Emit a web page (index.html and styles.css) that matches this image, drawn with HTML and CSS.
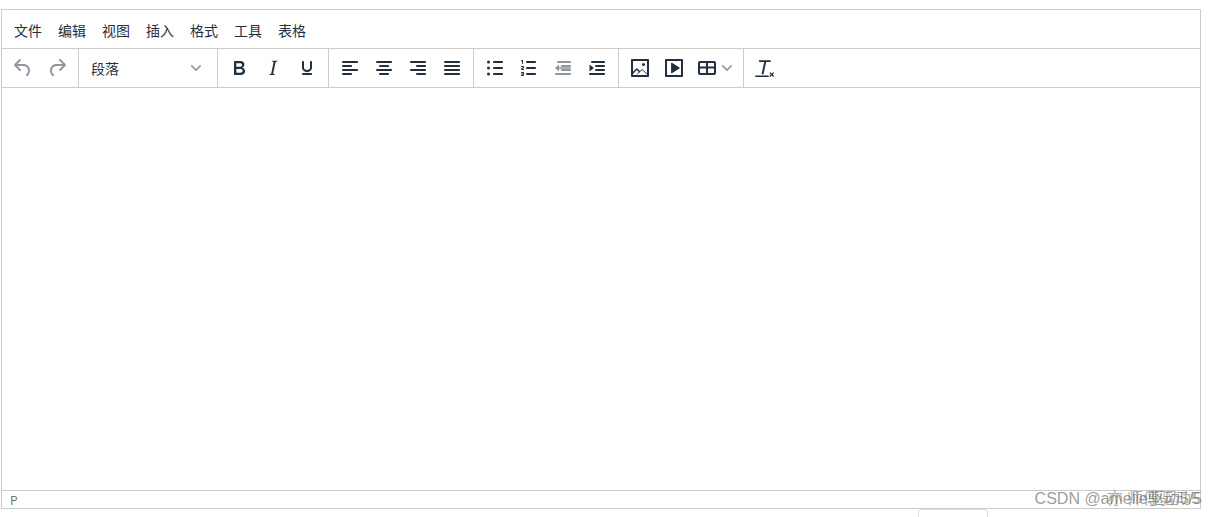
FILE: index.html
```html
<!DOCTYPE html>
<html lang="zh">
<head>
<meta charset="utf-8">
<title>编辑器</title>
<link rel="stylesheet" href="styles.css">
</head>
<body>
<div class="editor">
  <nav class="menubar">
    <span class="menu-item">文件</span>
    <span class="menu-item">编辑</span>
    <span class="menu-item">视图</span>
    <span class="menu-item">插入</span>
    <span class="menu-item">格式</span>
    <span class="menu-item">工具</span>
    <span class="menu-item">表格</span>
  </nav>
  <div class="toolbar">
    <div class="group">
      <span class="btn off"><svg viewBox="0 0 24 24"><path d="M6.4 8H12c3.7 0 6.2 2 6.8 5.1.6 2.7-.4 5.6-2.3 6.8a1 1 0 0 1-1-1.8c1.1-.6 1.8-2.7 1.4-4.6-.5-2.1-2.1-3.5-4.9-3.5H6.4l3.3 3.3a1 1 0 1 1-1.4 1.4l-5-5a1 1 0 0 1 0-1.4l5-5a1 1 0 0 1 1.4 1.4L6.4 8z"/></svg></span>
      <span class="btn off"><svg viewBox="0 0 24 24"><path d="M17.6 10H12c-2.8 0-4.4 1.4-4.9 3.5-.4 2 .3 4 1.4 4.6a1 1 0 1 1-1 1.8c-2-1.2-2.9-4.1-2.3-6.8.6-3 3-5.1 6.8-5.1h5.6l-3.3-3.3a1 1 0 1 1 1.4-1.4l5 5a1 1 0 0 1 0 1.4l-5 5a1 1 0 0 1-1.4-1.4l3.3-3.3z"/></svg></span>
    </div>
    <div class="group">
      <span class="select"><span>段落</span><svg class="chev" viewBox="0 0 10 10"><path d="M8.7 2.2c.3-.3.8-.3 1 0 .4.4.4.9 0 1.2L5.7 7.8c-.3.3-.9.3-1.2 0L.2 3.4a.8.8 0 0 1 0-1.2c.3-.3.8-.3 1.1 0L5 6l3.7-3.8z"/></svg></span>
    </div>
    <div class="group">
      <span class="btn"><svg viewBox="0 0 24 24"><path d="M7.8 19c-.3 0-.5 0-.6-.2l-.2-.5V5.7c0-.2 0-.4.2-.5l.6-.2h5c1.5 0 2.7.3 3.5 1 .7.6 1.1 1.4 1.1 2.5a3 3 0 0 1-.6 1.9c-.4.6-1 1-1.6 1.2.4.1.9.3 1.3.6s.8.7 1 1.2c.4.4.5 1 .5 1.6 0 1.3-.4 2.3-1.3 3-.8.7-2.1 1-3.8 1H7.8zm5-8.3c.6 0 1.2-.1 1.6-.5.4-.3.6-.7.6-1.3 0-1.1-.8-1.7-2.3-1.7H9.3v3.5h3.4zm.5 6c.7 0 1.3-.1 1.7-.4.4-.4.6-.9.6-1.5s-.2-1-.7-1.4c-.4-.3-1-.4-2-.4H9.4v3.8h4z"/></svg></span>
      <span class="btn"><svg viewBox="0 0 24 24"><path d="M16.7 4.7l-.1.9h-.3c-.6 0-1 0-1.4.3-.3.3-.4.6-.5 1.1l-2.1 9.8v.6c0 .5.4.8 1.4.8h.2l-.2.8H8l.2-.8h.2c1.1 0 1.8-.5 2-1.5l2-9.8.1-.5c0-.6-.4-.8-1.4-.8h-.3l.2-.9h5.8z"/></svg></span>
      <span class="btn"><svg viewBox="0 0 24 24"><path d="M16 5c.6 0 1 .4 1 1v5.5a4 4 0 0 1-.4 1.8l-1 1.4a5.3 5.3 0 0 1-5.5 1 5 5 0 0 1-1.6-1c-.5-.4-.8-.9-1.1-1.4a4 4 0 0 1-.4-1.8V6c0-.6.4-1 1-1s1 .4 1 1v5.5c0 .3 0 .6.2 1l.6.7a3.3 3.3 0 0 0 2.2.8 3.4 3.4 0 0 0 2.2-.8c.3-.2.4-.5.6-.8l.2-.9V6c0-.6.4-1 1-1zM8 17h8c.6 0 1 .4 1 1s-.4 1-1 1H8a1 1 0 0 1 0-2z"/></svg></span>
    </div>
    <div class="group">
      <span class="btn"><svg viewBox="0 0 24 24"><path d="M5 5h14c.6 0 1 .4 1 1s-.4 1-1 1H5a1 1 0 1 1 0-2zm0 4h8c.6 0 1 .4 1 1s-.4 1-1 1H5a1 1 0 1 1 0-2zm0 8h8c.6 0 1 .4 1 1s-.4 1-1 1H5a1 1 0 0 1 0-2zm0-4h14c.6 0 1 .4 1 1s-.4 1-1 1H5a1 1 0 0 1 0-2z"/></svg></span>
      <span class="btn"><svg viewBox="0 0 24 24"><path d="M5 5h14c.6 0 1 .4 1 1s-.4 1-1 1H5a1 1 0 1 1 0-2zm3 4h8c.6 0 1 .4 1 1s-.4 1-1 1H8a1 1 0 1 1 0-2zm0 8h8c.6 0 1 .4 1 1s-.4 1-1 1H8a1 1 0 0 1 0-2zm-3-4h14c.6 0 1 .4 1 1s-.4 1-1 1H5a1 1 0 0 1 0-2z"/></svg></span>
      <span class="btn"><svg viewBox="0 0 24 24"><path d="M5 5h14c.6 0 1 .4 1 1s-.4 1-1 1H5a1 1 0 1 1 0-2zm6 4h8c.6 0 1 .4 1 1s-.4 1-1 1h-8a1 1 0 0 1 0-2zm0 8h8c.6 0 1 .4 1 1s-.4 1-1 1h-8a1 1 0 0 1 0-2zm-6-4h14c.6 0 1 .4 1 1s-.4 1-1 1H5a1 1 0 0 1 0-2z"/></svg></span>
      <span class="btn"><svg viewBox="0 0 24 24"><path d="M5 5h14c.6 0 1 .4 1 1s-.4 1-1 1H5a1 1 0 1 1 0-2zm0 4h14c.6 0 1 .4 1 1s-.4 1-1 1H5a1 1 0 1 1 0-2zm0 4h14c.6 0 1 .4 1 1s-.4 1-1 1H5a1 1 0 0 1 0-2zm0 4h14c.6 0 1 .4 1 1s-.4 1-1 1H5a1 1 0 0 1 0-2z"/></svg></span>
    </div>
    <div class="group">
      <span class="btn"><svg viewBox="0 0 24 24"><path d="M11 5h8c.6 0 1 .4 1 1s-.4 1-1 1h-8a1 1 0 0 1 0-2zm0 6h8c.6 0 1 .4 1 1s-.4 1-1 1h-8a1 1 0 0 1 0-2zm0 6h8c.6 0 1 .4 1 1s-.4 1-1 1h-8a1 1 0 0 1 0-2zM5.5 4.5a1.5 1.5 0 1 1 0 3 1.5 1.5 0 0 1 0-3zm0 6a1.5 1.5 0 1 1 0 3 1.5 1.5 0 0 1 0-3zm0 6a1.5 1.5 0 1 1 0 3 1.5 1.5 0 0 1 0-3z"/></svg></span>
      <span class="btn"><svg viewBox="0 0 24 24"><path d="M10 17h8c.6 0 1 .4 1 1s-.4 1-1 1h-8a1 1 0 0 1 0-2zm0-6h8c.6 0 1 .4 1 1s-.4 1-1 1h-8a1 1 0 0 1 0-2zm0-6h8c.6 0 1 .4 1 1s-.4 1-1 1h-8a1 1 0 1 1 0-2zM6 4v3.5c0 .3-.2.5-.5.5a.5.5 0 0 1-.5-.5V5h-.5a.5.5 0 0 1 0-1H6zm-1 8.8l.2.2h1.3c.3 0 .5.2.5.5s-.2.5-.5.5H4.9a1 1 0 0 1-.9-1V13c0-.4.3-.8.6-1l1.2-.4.2-.3a.2.2 0 0 0-.2-.2H4.5a.5.5 0 0 1-.5-.5c0-.3.2-.5.5-.5h1.6c.5 0 .9.4.9 1v.4c0 .4-.3.8-.6 1l-1.2.4-.2.3zM7 17v2c0 .6-.4 1-1 1H4.5a.5.5 0 0 1 0-1h1.2c.2 0 .3-.1.3-.3 0-.2-.1-.3-.3-.3H4.4a.4.4 0 1 1 0-.8h1.3c.2 0 .3-.1.3-.3 0-.2-.1-.3-.3-.3H4.5a.5.5 0 1 1 0-1H6c.6 0 1 .4 1 1z"/></svg></span>
      <span class="btn off"><svg viewBox="0 0 24 24"><path d="M7.8 11.2h11.2c.6 0 1 .3 1 .8s-.4.8-1 .8H7.8l2 .1-.6.7-1.2-1.6 1.2-1.6.6.7zM4 12l4-3.4v6.8L4 12zm3-7h12c.6 0 1 .4 1 1s-.4 1-1 1H7a1 1 0 1 1 0-2zm4 4h8c.6 0 1 .4 1 1s-.4 1-1 1h-8a1 1 0 0 1 0-2zm0 4h8c.6 0 1 .4 1 1s-.4 1-1 1h-8a1 1 0 0 1 0-2zm-6 4h14c.6 0 1 .4 1 1s-.4 1-1 1H5a1 1 0 0 1 0-2z"/></svg></span>
      <span class="btn"><svg viewBox="0 0 24 24"><path d="M7 5h12c.6 0 1 .4 1 1s-.4 1-1 1H7a1 1 0 1 1 0-2zm4 4h8c.6 0 1 .4 1 1s-.4 1-1 1h-8a1 1 0 0 1 0-2zm0 4h8c.6 0 1 .4 1 1s-.4 1-1 1h-8a1 1 0 0 1 0-2zm-6 4h14c.6 0 1 .4 1 1s-.4 1-1 1H5a1 1 0 0 1 0-2zM4.5 8.6 9 12l-4.500 3.400z"/></svg></span>
    </div>
    <div class="group">
      <span class="btn"><svg viewBox="0 0 24 24"><path d="M5 15.700l3.300-3.200c.3-.3.700-.3 1 0L12 15l1.700-1.600c.3-.3.700-.3 1 0l4.300 4.100V5H5v10.700zM5 18v1h3l2.800-2.900-2-2L5 18zm14 1v-.500l-4.800-4.600-1.700 1.600-1.700 1.700L8 19h11zM4 3h16c.6 0 1 .4 1 1v16c0 .6-.4 1-1 1H4a1 1 0 0 1-1-1V4c0-.6.4-1 1-1zm11.500 7a1.500 1.500 0 1 1 0-3 1.500 1.500 0 0 1 0 3z" transform="translate(0 0)"/></svg></span>
      <span class="btn"><svg viewBox="0 0 24 24"><path d="M4 3h16c.6 0 1 .4 1 1v16c0 .6-.4 1-1 1H4a1 1 0 0 1-1-1V4c0-.6.4-1 1-1zm1 2v14h14V5H5zm4.100 2.300c0-.4.400-.7.800-.5l7.600 4.700c.3.200.3.700 0 .9l-7.600 4.800c-.4.200-.8 0-.8-.5V7.300z"/></svg></span>
      <span class="btn split"><svg viewBox="0 0 24 24"><path d="M19 5a2 2 0 0 1 2 2v10a2 2 0 0 1-2 2H5a2 2 0 0 1-2-2V7c0-1.100.9-2 2-2h14zM5 7v3.500h6V7H5zm8 0v3.500h6V7h-6zm6 5.500h-6V17h6v-4.500zM11 17v-4.500H5V17h6z"/></svg><svg class="chev" viewBox="0 0 10 10"><path d="M8.700 2.200c.3-.3.800-.3 1 0 .4.400.4.900 0 1.200L5.700 7.800c-.3.300-.9.300-1.200 0L.2 3.400a.8.800 0 0 1 0-1.200c.3-.3.800-.3 1.100 0L5 6l3.700-3.800z"/></svg></span>
    </div>
    <div class="group last">
      <span class="btn"><svg viewBox="0 0 24 24"><path d="M13.200 6l-2.500 11.500c-.1.700-.7 1-1.300.9-.5-.1-.8-.5-.7-1L11.200 6H7.500a1 1 0 1 1 0-1.800h9.800a1 1 0 0 1 0 1.800h-4.100zM3 19.500h12c.6 0 1 .3 1 .8s-.4.700-1 .7H3c-.6 0-1-.3-1-.7s.4-.8 1-.8zm14.200-3.300 1.500 1.500 1.500-1.500.9.900-1.500 1.500 1.500 1.500-.9.900-1.500-1.500-1.500 1.500-.9-.9 1.500-1.500-1.500-1.500z"/></svg></span>
    </div>
  </div>
  <main class="content"></main>
  <footer class="statusbar">p</footer>
  <span class="mark">CSDN @amelie驱动5/5</span>
  <span class="mark over">亦 师傅驱动5</span>
</div>
<div class="tab"></div>
</body>
</html>
```

FILE: styles.css
```css
* { box-sizing: border-box; }
html, body { margin: 0; height: 517px; overflow: hidden; background: #fff; }
body {
  padding: 9px 16px 0 1px;
  font-family: "Noto Sans CJK SC", "Liberation Sans", sans-serif;
  color: #222f3e;
  position: relative;
}
.editor {
  position: relative;
  display: flex;
  flex-direction: column;
  width: 1200px;
  height: 500px;
  border: 1px solid #ccc;
}
.menubar {
  display: flex;
  align-items: center;
  height: 39px;
  padding: 2px 4px 0;
  border-bottom: 1px solid #ccc;
}
.menu-item {
  width: 44px;
  text-align: center;
  font-size: 14px;
  line-height: 20px;
}
.toolbar {
  display: flex;
  height: 39px;
  border-bottom: 1px solid #ccc;
}
.group {
  display: flex;
  align-items: center;
  padding: 0 4px;
  border-right: 1px solid #ccc;
}
.group.last { border-right: 0; }
.btn {
  display: flex;
  align-items: center;
  justify-content: center;
  width: 34px;
  height: 34px;
  flex: none;
}
.btn svg { width: 24px; height: 24px; flex: none; fill: #222f3e; }
.btn.off svg { fill: rgba(34, 47, 62, 0.5); }
.btn.split { width: 48px; justify-content: flex-start; padding-left: 4px; }
.btn.split .chev { width: 10px; height: 10px; margin-left: 3px; fill: rgba(34, 47, 62, 0.5); }
.select {
  display: flex;
  align-items: center;
  justify-content: space-between;
  width: 130px;
  height: 34px;
  padding: 0 12px 0 8px;
  font-size: 14px;
}
.chev { width: 10px; height: 10px; fill: rgba(34, 47, 62, 0.5); }
.content { flex: 1; }
.statusbar {
  height: 18px;
  padding-left: 8px;
  border-top: 1px solid #ccc;
  font-size: 12px;
  line-height: 17px;
  color: rgba(34, 47, 62, 0.7);
  text-transform: uppercase;
}
.mark {
  position: absolute;
  right: -2px;
  bottom: -2px;
  font-family: "Liberation Sans", "Noto Sans CJK SC", sans-serif;
  font-size: 16px;
  line-height: 22px;
  color: rgba(100, 100, 100, 0.65);
  white-space: nowrap;
}
.mark.over { right: 0; color: rgba(90, 90, 90, 0.5); }
.tab {
  position: absolute;
  left: 918px;
  top: 509px;
  width: 70px;
  height: 20px;
  border: 1px solid #ddd;
  border-radius: 3px;
}
```
